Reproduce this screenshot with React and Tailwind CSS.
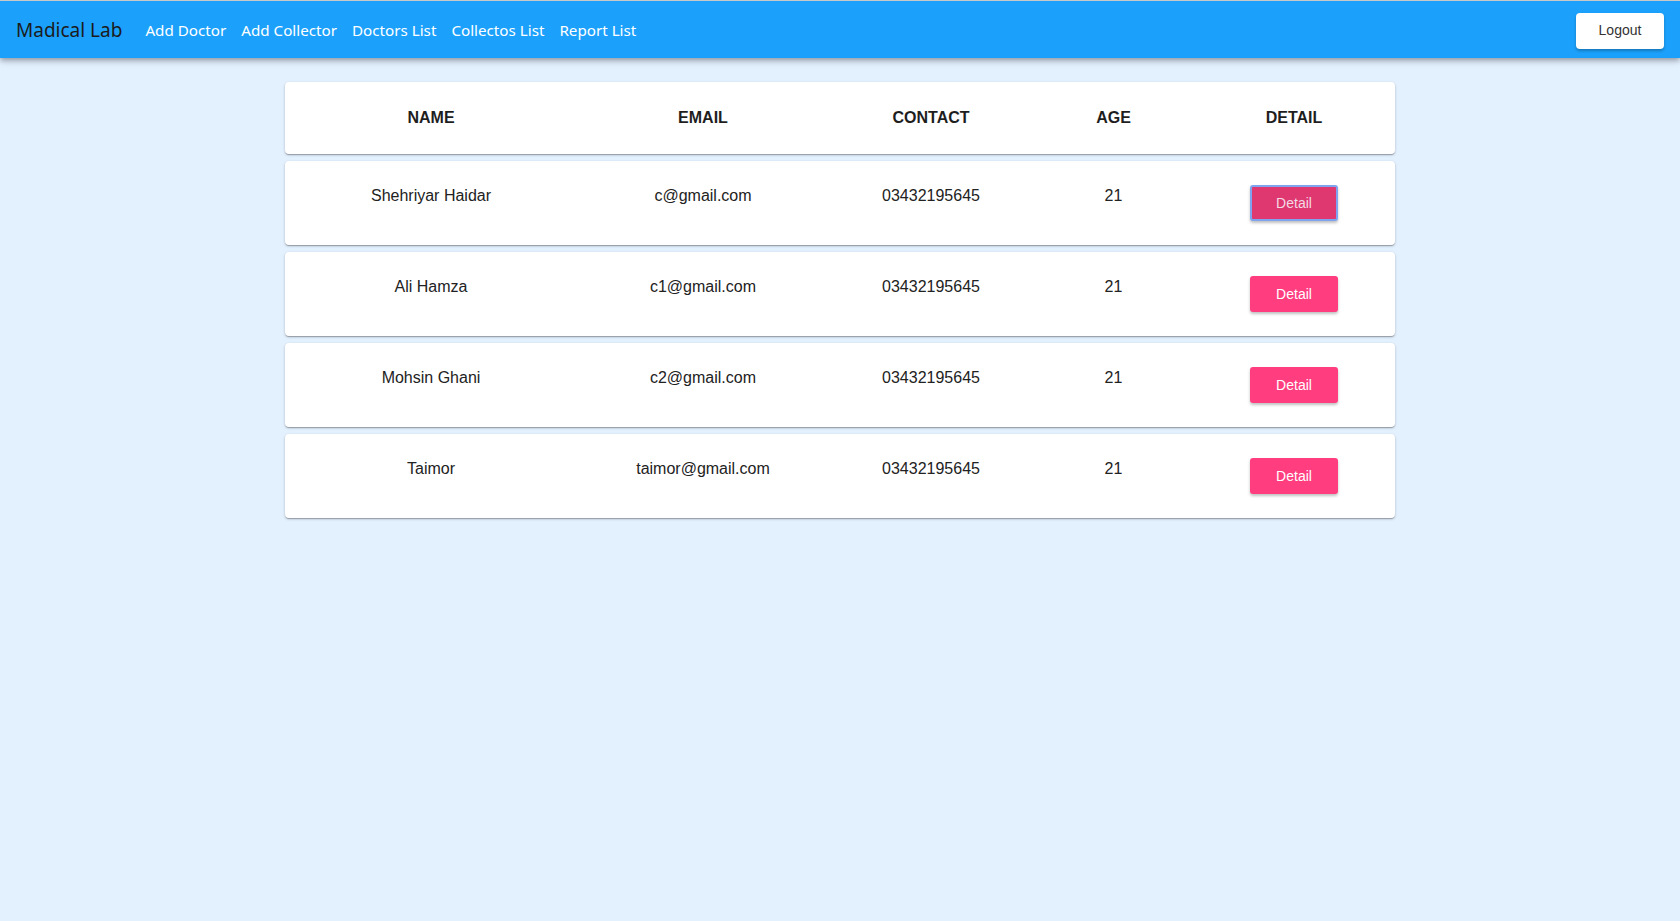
import React from 'react';

const navLinks = ['Add Doctor', 'Add Collector', 'Doctors List', 'Collectos List', 'Report List'];

const people = [
  { name: 'Shehriyar Haidar', email: 'c@gmail.com', contact: '03432195645', age: 21, focused: true },
  { name: 'Ali Hamza', email: 'c1@gmail.com', contact: '03432195645', age: 21 },
  { name: 'Mohsin Ghani', email: 'c2@gmail.com', contact: '03432195645', age: 21 },
  { name: 'Taimor', email: 'taimor@gmail.com', contact: '03432195645', age: 21 },
];

const cols = 'grid grid-cols-[292px_252px_204px_161px_200px]';
const card = 'bg-white rounded-[4px] shadow-[0_1px_3px_rgba(0,0,0,0.2),0_1px_1px_rgba(0,0,0,0.14),0_2px_1px_-1px_rgba(0,0,0,0.12)]';

export default function App() {
  return (
    <div className="min-h-[921px] bg-[#e3f0fe] font-['Liberation_Sans',Arial,sans-serif]">
      {/* Navbar */}
      <nav className="h-[58px] pt-[2px] border-t border-[#c8c8c8] bg-[#1ba1fc] flex items-center px-4 shadow-[0_2px_4px_-1px_rgba(0,0,0,0.2),0_4px_5px_0_rgba(0,0,0,0.14),0_1px_10px_0_rgba(0,0,0,0.12)] relative z-10">
        <span className="font-['Noto_Sans',sans-serif] text-[19px] text-[#1b1b1b] mr-[23px]">Madical Lab</span>
        <div className="flex gap-[15px]">
          {navLinks.map((l) => (
            <a key={l} className="font-['Noto_Sans',sans-serif] text-[15.2px] text-white cursor-pointer">{l}</a>
          ))}
        </div>
        <button className="ml-auto w-[88px] h-[36px] bg-white rounded-[4px] text-[14px] text-[#333] shadow-[0_2px_3px_rgba(0,0,0,0.25)]">
          Logout
        </button>
      </nav>

      {/* Table */}
      <div className="w-[1110px] mx-auto pt-[24px] flex flex-col gap-[7px]">
        <div className={`${card} ${cols} h-[72px] pb-[1px] items-center text-center text-[16px] font-bold text-[#1e1e1e]`}>
          <div>NAME</div>
          <div>EMAIL</div>
          <div>CONTACT</div>
          <div>AGE</div>
          <div>DETAIL</div>
        </div>
        {people.map((p) => (
          <div key={p.email} className={`${card} ${cols} h-[84px] items-start text-center text-[16px] leading-[20px] text-[#222]`}>
            <div className="pt-[25px]">{p.name}</div>
            <div className="pt-[25px]">{p.email}</div>
            <div className="pt-[25px]">{p.contact}</div>
            <div className="pt-[25px]">{p.age}</div>
            <div className="pt-[24px] flex justify-center">
              <button
                className={
                  p.focused
                    ? 'w-[88px] h-[36px] rounded-[3px] bg-[#df376f] text-[14px] text-[#f3dbe4] border-2 border-[#7ea3ef] shadow-[0_2px_3px_rgba(0,0,0,0.25)]'
                    : 'w-[88px] h-[36px] rounded-[3px] bg-[#ff3d7f] text-[14px] text-white shadow-[0_2px_3px_rgba(0,0,0,0.25)]'
                }
              >
                Detail
              </button>
            </div>
          </div>
        ))}
      </div>
    </div>
  );
}
